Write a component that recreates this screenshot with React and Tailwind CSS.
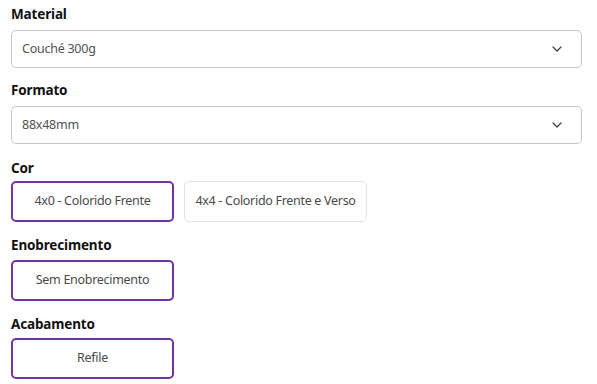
import React from "react";

const font = { fontFamily: '"Noto Sans", "Open Sans", sans-serif' };

function Chevron() {
  return (
    <svg width="10" height="6" viewBox="0 0 10 6" fill="none">
      <path d="M1 1L5 5L9 1" stroke="#3a3a3a" strokeWidth="1.2" strokeLinecap="round" strokeLinejoin="round" />
    </svg>
  );
}

function Select({ value }) {
  return (
    <div className="flex h-[38px] w-[571px] items-center justify-between rounded-[5px] border border-[#c6c6c6] bg-white pl-[10px] pr-[19px]">
      <span className="text-[12.5px] tracking-[-0.25px] text-[#525252]">{value}</span>
      <Chevron />
    </div>
  );
}

function Opt({ label, active, w }) {
  return (
    <div
      className={
        "flex h-[41px] items-center justify-center rounded-[5px] bg-white text-[12.5px] tracking-[-0.3px] text-[#4a4a4a] " +
        (active ? "border-2 border-[#6f35a5]" : "border border-[#e3e3e3]")
      }
      style={{ width: w }}
    >
      {label}
    </div>
  );
}

function Label({ children, className }) {
  return <div className={"text-[13.5px] font-bold leading-5 tracking-[-0.15px] text-[#111] " + className}>{children}</div>;
}

export default function App() {
  return (
    <div className="min-h-[384px] w-[597px] bg-white pl-[11px] pt-[4px]" style={font}>
      <Label className="mb-[6px]">Material</Label>
      <Select value="Couché 300g" />
      <Label className="mb-[6px] mt-[12px]">Formato</Label>
      <Select value="88x48mm" />
      <Label className="mb-[3px] mt-[14px]">Cor</Label>
      <div className="flex gap-[10px]">
        <Opt label="4x0 - Colorido Frente" active w={163} />
        <Opt label="4x4 - Colorido Frente e Verso" w={183} />
      </div>
      <Label className="mb-[5px] mt-[13px]">Enobrecimento</Label>
      <Opt label="Sem Enobrecimento" active w={163} />
      <Label className="mb-[4px] mt-[13px]">Acabamento</Label>
      <Opt label="Refile" active w={163} />
    </div>
  );
}
